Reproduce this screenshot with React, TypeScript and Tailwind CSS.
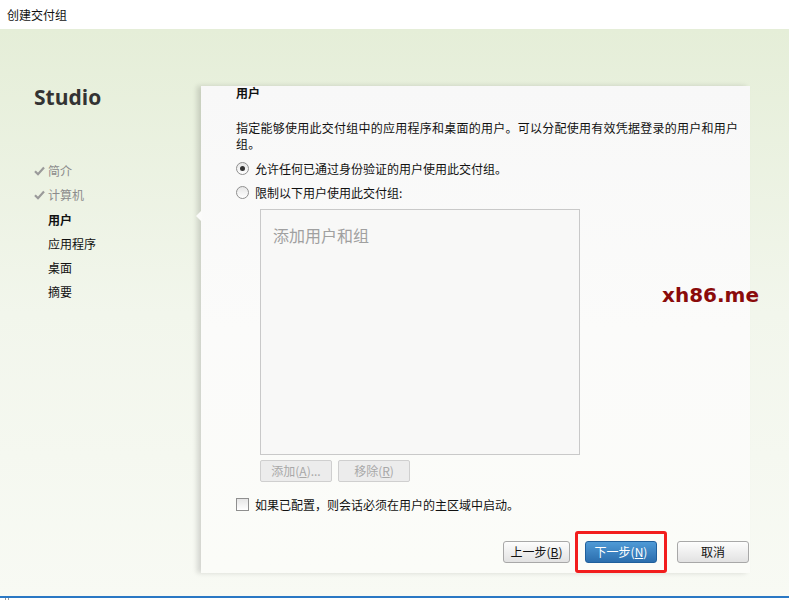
const cjk = { fontFamily: '"Noto Sans CJK SC", "Noto Sans", sans-serif' };

function Radio({ checked }: { checked?: boolean }) {
  return (
    <span className="w-[13px] h-[13px] rounded-full border border-[#8f8f8f] bg-gradient-to-b from-[#e6e6e6] to-[#ffffff] flex items-center justify-center shrink-0">
      {checked && <span className="w-[5px] h-[5px] rounded-full bg-[#333]" />}
    </span>
  );
}

function Check() {
  return (
    <svg width="11" height="10" viewBox="0 0 11 10" className="shrink-0">
      <path d="M1 5.2 L4 8.2 L10 1.5" fill="none" stroke="#9a9a9a" strokeWidth="2.2" />
    </svg>
  );
}

export default function App() {
  const steps = [
    { label: '简介', done: true },
    { label: '计算机', done: true },
    { label: '用户', current: true },
    { label: '应用程序' },
    { label: '桌面' },
    { label: '摘要' },
  ];

  return (
    <div className="w-[789px] h-[600px] flex flex-col bg-white overflow-hidden relative" style={cjk}>
      {/* title bar */}
      <div className="h-[29px] shrink-0 bg-white flex items-center pl-[7px] text-[12px] text-[#111]">
        创建交付组
      </div>

      {/* body */}
      <div className="flex-1 flex bg-gradient-to-b from-[#e5eed8] via-[#f2f6ec] to-[#f8faf4]">
        {/* sidebar */}
        <div className="w-[201px] shrink-0 flex flex-col pl-[34px]">
          <div
            className="mt-[54px] text-[21px] font-bold text-[#333] leading-[28px]"
            style={{ fontFamily: '"Open Sans", "Noto Sans", sans-serif' }}
          >
            Studio
          </div>
          <div className="mt-[51px] flex flex-col gap-[6.3px]">
            {steps.map((s) => (
              <div key={s.label} className="flex items-center h-[18px] text-[12px]">
                <span className="w-[14px] flex items-center">{s.done && <Check />}</span>
                <span
                  className={
                    s.done
                      ? 'text-[#8c8c8c]'
                      : s.current
                      ? 'text-[#111] font-bold'
                      : 'text-[#111]'
                  }
                >
                  {s.label}
                </span>
              </div>
            ))}
          </div>
        </div>

        {/* content panel */}
        <div className="relative w-[549px] mt-[57px] mb-[23px] bg-gradient-to-b from-[#f8f8f8] via-[#fbfbfa] to-[#fbfcf8] shadow-[-4px_0_5px_rgba(0,0,0,0.14)] flex flex-col pl-[35px] text-[12px] text-[#111]">
          {/* notch */}
          <span className="absolute left-[-5px] top-[124px] w-0 h-0 border-y-[6px] border-y-transparent border-r-[6px] border-r-[#fbfbfa]" />

          <div className="font-bold mt-[-2px] leading-[17px]">用户</div>
          <div className="mt-[19px] w-[506px] leading-[16px] tracking-[0.25px]">
            指定能够使用此交付组中的应用程序和桌面的用户。可以分配使用有效凭据登录的用户和用户组。
          </div>
          <div className="mt-[8px] flex items-center gap-[6px] h-[17px]">
            <Radio checked />
            <span>允许任何已通过身份验证的用户使用此交付组。</span>
          </div>
          <div className="mt-[7px] flex items-center gap-[6px] h-[17px]">
            <Radio />
            <span>限制以下用户使用此交付组:</span>
          </div>

          <div className="ml-[24px] mt-[8px] w-[320px] h-[246px] border border-[#c9c9c9] bg-[#f8f8f7] pt-[13px] pl-[12px] text-[16px] text-[#a0a0a0]">
            添加用户和组
          </div>
          <div className="ml-[24px] mt-[5px] flex gap-[6px]">
            <div className="w-[72px] h-[22px] border border-[#cfcfcf] rounded-[2px] bg-[#ececec] text-[#a8a8a8] flex items-center justify-center">
              添加(<u>A</u>)...
            </div>
            <div className="w-[72px] h-[22px] border border-[#cfcfcf] rounded-[2px] bg-[#ececec] text-[#a8a8a8] flex items-center justify-center">
              移除(<u>R</u>)
            </div>
          </div>

          <div className="mt-[14px] flex items-center gap-[6px] h-[17px]">
            <span className="w-[13px] h-[13px] border border-[#8f8f8f] bg-gradient-to-b from-[#e6e6e6] to-white shrink-0" />
            <span>如果已配置，则会话必须在用户的主区域中启动。</span>
          </div>

          <div className="mt-[18px] flex items-center justify-end pr-[1px]">
            <div className="w-[67px] h-[22px] border border-[#a8a8a8] rounded-[3px] bg-gradient-to-b from-[#fdfdfd] to-[#e2e2e2] flex items-center justify-center">
              上一步(<u>B</u>)
            </div>
            <div className="ml-[5px] mr-[10px] border-[3px] border-[#f21d1d] rounded-[3px] px-[7px] py-[7px]">
              <div className="w-[72px] h-[22px] border border-[#1f5f9c] rounded-[3px] bg-gradient-to-b from-[#4f9ad6] to-[#2b6eae] text-white flex items-center justify-center">
                下一步(<u>N</u>)
              </div>
            </div>
            <div className="w-[72px] h-[22px] border border-[#a8a8a8] rounded-[3px] bg-gradient-to-b from-[#fdfdfd] to-[#e2e2e2] flex items-center justify-center">
              取消
            </div>
          </div>
        </div>
        <div className="flex-1" />
      </div>

      {/* bottom edge */}
      <div className="h-[2px] shrink-0 bg-[#2a78c4]" />
      <div className="h-[3px] shrink-0 bg-white pl-[5px]">
        <div className="w-[4px] h-[3px] border-x border-[#9a9a9a]" />
      </div>

      {/* watermark */}
      <div
        className="absolute left-[662px] top-[280px] text-[20px] font-bold text-[#8a0b0b]"
        style={{ fontFamily: '"DejaVu Sans", sans-serif' }}
      >
        xh86.me
      </div>
    </div>
  );
}
